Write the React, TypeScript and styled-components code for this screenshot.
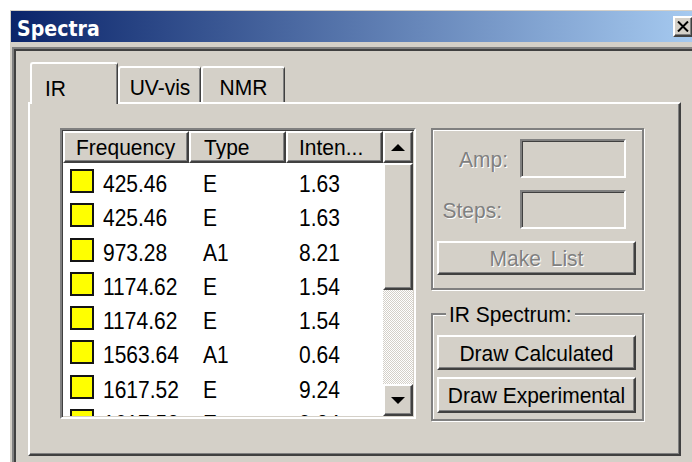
import React from "react";
import styled, { createGlobalStyle, css } from "styled-components";

const face = "#d4d0c8";
const shadow = "#808080";
const dark = "#404040";
const light = "#ffffff";

const GlobalStyle = createGlobalStyle`
  html, body {
    margin: 0;
    padding: 0;
    background: #ffffff;
    overflow: hidden;
  }
  body {
    font-family: "Liberation Sans", Arial, sans-serif;
    font-size: 21px;
    color: #000000;
  }
  #root {
    width: 692px;
    height: 462px;
    overflow: hidden;
  }
`;

const raised = css`
  box-sizing: border-box;
  border-style: solid;
  border-width: 2px;
  border-color: ${light} ${dark} ${dark} ${light};
  box-shadow: inset -1px -1px 0 ${shadow};
  background: ${face};
`;

const sunken = css`
  box-sizing: border-box;
  border-style: solid;
  border-width: 2px;
  border-color: ${shadow} ${light} ${light} ${shadow};
  padding: 1px;
  box-shadow: inset 1px 1px 0 ${dark}, inset -1px -1px 0 ${face};
`;

const Page = styled.div`
  padding: 10px 0 0 10px;
`;

const Window = styled.div`
  width: 686px;
  height: 470px;
  padding: 1px;
  box-sizing: border-box;
  background: ${face};
  display: flex;
  flex-direction: column;
`;

const TitleBar = styled.div`
  flex: none;
  height: 31px;
  display: flex;
  align-items: center;
  padding: 0 2px 0 6px;
  background: linear-gradient(to right, #0a246a, #a6caf0);
`;

const Caption = styled.span`
  flex: 1;
  padding-top: 3px;
  font-family: "DejaVu Sans", Verdana, sans-serif;
  font-weight: bold;
  font-size: 19px;
  color: #ffffff;
  transform: scaleY(1.15);
  transform-origin: left center;
`;

const CloseBox = styled.div`
  ${raised}
  width: 20px;
  height: 21px;
  display: flex;
  align-items: center;
  justify-content: center;
`;

const Client = styled.div`
  flex: 1;
  margin: 5px 0 0 1px;
  border-top: 2px solid ${shadow};
  border-left: 2px solid ${shadow};
  box-shadow: inset 2px 2px 0 ${dark};
  padding: 13px 0 0 14px;
`;

const TabStrip = styled.div`
  position: relative;
  z-index: 1;
  height: 40px;
  display: flex;
  align-items: flex-end;
  padding-left: 2px;
`;

const Tab = styled.div<{ $active?: boolean; $w: number; $pl?: number }>`
  box-sizing: border-box;
  width: ${(p) => p.$w}px;
  height: ${(p) => (p.$active ? 42 : 36)}px;
  margin-bottom: ${(p) => (p.$active ? -2 : 0)}px;
  background: ${face};
  border-top: 2px solid ${light};
  border-left: 2px solid ${light};
  border-right: 1px solid ${dark};
  box-shadow: inset -1px 0 0 ${shadow};
  border-radius: 3px 3px 0 0;
  display: flex;
  align-items: flex-start;
  justify-content: ${(p) => (p.$pl != null ? "flex-start" : "center")};
  padding-left: ${(p) => p.$pl ?? 0}px;
  padding-top: ${(p) => (p.$active ? 12 : 7)}px;
`;

const Txt = styled.span<{ $sy?: number; $dy?: number }>`
  display: inline-block;
  white-space: pre;
  line-height: 24px;
  transform: translateY(${(p) => p.$dy ?? 0}px) scaleY(${(p) => p.$sy ?? 1.08});
`;

const Dim = styled(Txt)<{ $wide?: boolean }>`
  color: ${shadow};
  text-shadow: 1px 1px 0 ${light};
  word-spacing: ${(p) => (p.$wide ? 4 : 0)}px;
`;

const Panel = styled.div`
  box-sizing: border-box;
  width: 653px;
  height: 354px;
  border-style: solid;
  border-width: 2px;
  border-color: ${light} ${dark} ${dark} ${light};
  box-shadow: inset -1px -1px 0 ${shadow};
  background: ${face};
  display: flex;
  align-items: flex-start;
  gap: 15px;
  padding: 24px 0 0 30px;
`;

const ListView = styled.div`
  ${sunken}
  width: 356px;
  height: 291px;
  background: #ffffff;
  display: grid;
  grid-template-columns: 320px 30px;
  overflow: hidden;
`;

const ListMain = styled.div`
  display: flex;
  flex-direction: column;
  overflow: hidden;
`;

const COLS = "126px 97px 97px";

const Header = styled.div`
  flex: none;
  display: grid;
  grid-template-columns: ${COLS};
  height: 32px;
`;

const HeadCell = styled.div<{ $pl: number }>`
  ${raised}
  display: flex;
  align-items: center;
  padding-left: ${(p) => p.$pl}px;
  overflow: hidden;
`;

const Rows = styled.div`
  flex: 1;
  overflow: hidden;
  padding-top: 1px;
`;

const Row = styled.div`
  display: grid;
  grid-template-columns: ${COLS};
  height: 34.25px;
  align-items: center;
`;

const FreqCell = styled.div`
  display: flex;
  align-items: center;
  gap: 9px;
  padding-left: 7px;
`;

const Cell = styled.div<{ $pl: number }>`
  padding-left: ${(p) => p.$pl}px;
`;

const Swatch = styled.span`
  flex: none;
  box-sizing: border-box;
  width: 24px;
  height: 24px;
  background: #ffff00;
  border: 2px solid #141414;
`;

const ScrollBar = styled.div`
  display: flex;
  flex-direction: column;
`;

const ArrowButton = styled.div`
  ${raised}
  flex: none;
  height: 32px;
  display: flex;
  align-items: center;
  justify-content: center;
`;

const Thumb = styled.div`
  ${raised}
  flex: none;
  height: 127px;
`;

const Track = styled.div`
  flex: 1;
  background: repeating-conic-gradient(${face} 0 25%, ${light} 0 50%) 0 0 / 2px 2px;
`;

const SideColumn = styled.div`
  width: 213px;
  display: flex;
  flex-direction: column;
  gap: 12px;
`;

const Group = styled.fieldset<{ $h?: number }>`
  margin: 0;
  min-width: 0;
  box-sizing: border-box;
  width: 213px;
  ${(p) => (p.$h ? `height: ${p.$h}px;` : "")}
  border: 2px solid ${shadow};
  box-shadow: inset 1px 1px 0 ${light}, 1px 1px 0 ${light};
  padding: 9px 6px 6px 4px;
`;

const GroupTitle = styled.legend`
  margin-left: 9px;
  padding: 0 3px;
  background: ${face};
  line-height: 24px;
`;

const Stack = styled.div<{ $gap: number }>`
  display: flex;
  flex-direction: column;
  gap: ${(p) => p.$gap}px;
`;

const FieldRow = styled.div<{ $labelGap: number }>`
  height: 39px;
  display: flex;
  align-items: center;
  justify-content: flex-end;
  gap: ${(p) => p.$labelGap}px;
  padding-right: 10px;
`;

const Field = styled.div`
  ${sunken}
  width: 106px;
  height: 39px;
  background: ${face};
`;

const PushButton = styled.button<{ $h: number }>`
  ${raised}
  width: 199px;
  height: ${(p) => p.$h}px;
  padding: 0;
  margin: 0;
  font: inherit;
  color: #000000;
  display: flex;
  align-items: center;
  justify-content: center;
`;

const UpArrow = () => (
  <svg width="14" height="7" viewBox="0 0 14 7">
    <polygon points="0,7 14,7 7,0" fill="#000" />
  </svg>
);

const DownArrow = () => (
  <svg width="14" height="7" viewBox="0 0 14 7">
    <polygon points="0,0 14,0 7,7" fill="#000" />
  </svg>
);

const CloseGlyph = () => (
  <svg width="12" height="11" viewBox="0 0 12 11">
    <path d="M1 0.5 L11 10.5 M11 0.5 L1 10.5" stroke="#000" strokeWidth="2" />
  </svg>
);

const peaks = [
  { freq: "425.46", type: "E", inten: "1.63" },
  { freq: "425.46", type: "E", inten: "1.63" },
  { freq: "973.28", type: "A1", inten: "8.21" },
  { freq: "1174.62", type: "E", inten: "1.54" },
  { freq: "1174.62", type: "E", inten: "1.54" },
  { freq: "1563.64", type: "A1", inten: "0.64" },
  { freq: "1617.52", type: "E", inten: "9.24" },
  { freq: "1617.52", type: "E", inten: "9.24" },
];

export default function App() {
  return (
    <>
      <GlobalStyle />
      <Page>
        <Window>
          <TitleBar>
            <Caption>Spectra</Caption>
            <CloseBox>
              <CloseGlyph />
            </CloseBox>
          </TitleBar>
          <Client>
            <TabStrip>
              <Tab $active $w={88} $pl={13}>
                <Txt>IR</Txt>
              </Tab>
              <Tab $w={83}>
                <Txt>UV-vis</Txt>
              </Tab>
              <Tab $w={84}>
                <Txt>NMR</Txt>
              </Tab>
            </TabStrip>
            <Panel>
              <ListView>
                <ListMain>
                  <Header>
                    <HeadCell $pl={11}>
                      <Txt>Frequency</Txt>
                    </HeadCell>
                    <HeadCell $pl={13}>
                      <Txt>Type</Txt>
                    </HeadCell>
                    <HeadCell $pl={11}>
                      <Txt>Inten...</Txt>
                    </HeadCell>
                  </Header>
                  <Rows>
                    {peaks.map((p, i) => (
                      <Row key={i}>
                        <FreqCell>
                          <Swatch />
                          <Txt $sy={1.18} $dy={3}>{p.freq}</Txt>
                        </FreqCell>
                        <Cell $pl={14}>
                          <Txt $sy={1.18} $dy={3}>{p.type}</Txt>
                        </Cell>
                        <Cell $pl={13}>
                          <Txt $sy={1.18} $dy={3}>{p.inten}</Txt>
                        </Cell>
                      </Row>
                    ))}
                  </Rows>
                </ListMain>
                <ScrollBar>
                  <ArrowButton>
                    <UpArrow />
                  </ArrowButton>
                  <Thumb />
                  <Track />
                  <ArrowButton>
                    <DownArrow />
                  </ArrowButton>
                </ScrollBar>
              </ListView>
              <SideColumn>
                <Group $h={162}>
                  <Stack $gap={12}>
                    <FieldRow $labelGap={12}>
                      <Dim>Amp:</Dim>
                      <Field />
                    </FieldRow>
                    <FieldRow $labelGap={18}>
                      <Dim>Steps:</Dim>
                      <Field />
                    </FieldRow>
                    <PushButton $h={34} disabled>
                      <Dim $wide>Make List</Dim>
                    </PushButton>
                  </Stack>
                </Group>
                <Group>
                  <GroupTitle>
                    <Txt>IR Spectrum:</Txt>
                  </GroupTitle>
                  <Stack $gap={7}>
                    <PushButton $h={35}>
                      <Txt>Draw Calculated</Txt>
                    </PushButton>
                    <PushButton $h={36}>
                      <Txt>Draw Experimental</Txt>
                    </PushButton>
                  </Stack>
                </Group>
              </SideColumn>
            </Panel>
          </Client>
        </Window>
      </Page>
    </>
  );
}
